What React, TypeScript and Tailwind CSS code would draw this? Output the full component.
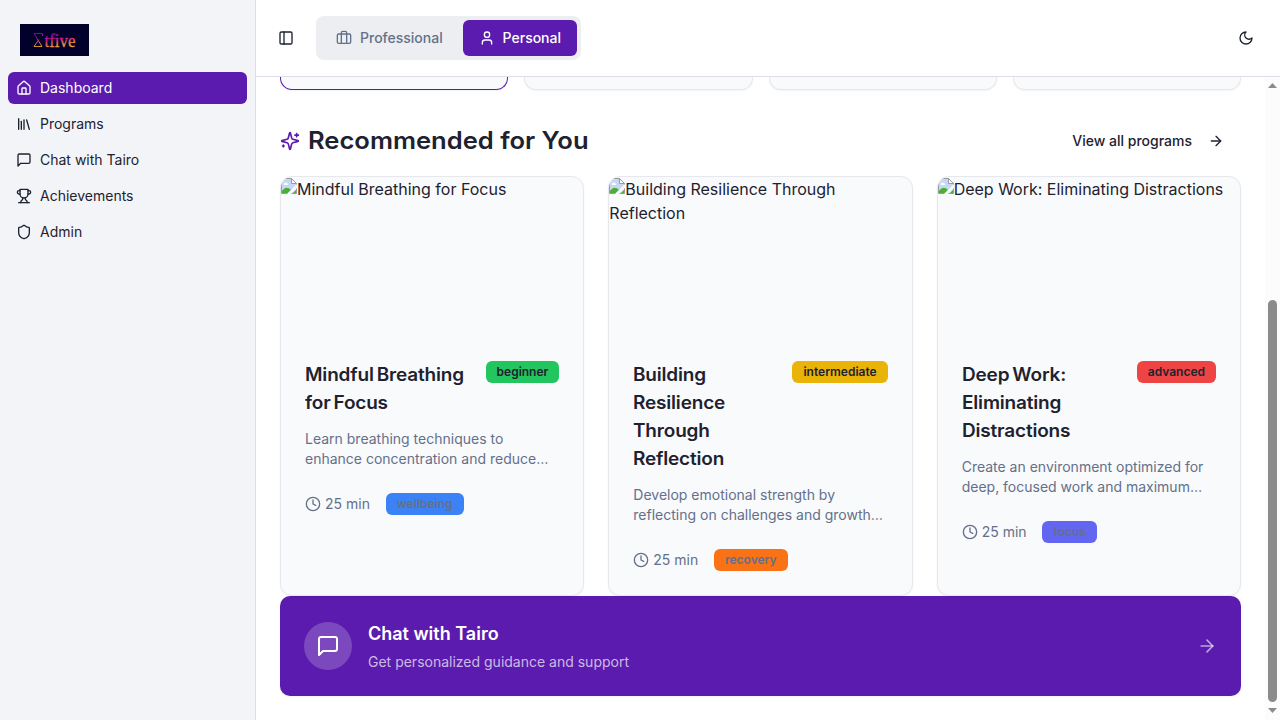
import type { ReactNode } from "react";
import { ArrowRight, Clock, House, Library, PanelLeft, Shield, User } from "lucide-react";

type IconProps = { size?: number; className?: string };

function Outline({ size = 16, className, children }: IconProps & { children: ReactNode }) {
  return (
    <svg
      width={size}
      height={size}
      viewBox="0 0 24 24"
      fill="none"
      stroke="currentColor"
      strokeWidth="2"
      strokeLinecap="round"
      strokeLinejoin="round"
      className={className}
    >
      {children}
    </svg>
  );
}

function ChatIcon(props: IconProps) {
  return (
    <Outline {...props}>
      <path d="M21 15a2 2 0 0 1-2 2H7l-4 4V5a2 2 0 0 1 2-2h14a2 2 0 0 1 2 2z" />
    </Outline>
  );
}

function TrophyIcon(props: IconProps) {
  return (
    <Outline {...props}>
      <path d="M6 9H4.5a2.5 2.5 0 0 1 0-5H6" />
      <path d="M18 9h1.5a2.5 2.5 0 0 0 0-5H18" />
      <path d="M4 22h16" />
      <path d="M10 14.66V17c0 .55-.47.98-.97 1.21C7.85 18.75 7 20.24 7 22" />
      <path d="M14 14.66V17c0 .55.47.98.97 1.21C16.15 18.75 17 20.24 17 22" />
      <path d="M18 2H6v7a6 6 0 0 0 12 0V2Z" />
    </Outline>
  );
}

function SparklesIcon(props: IconProps) {
  return (
    <Outline {...props}>
      <path d="M9.937 15.5A2 2 0 0 0 8.5 14.063l-6.135-1.582a.5.5 0 0 1 0-.962L8.5 9.936A2 2 0 0 0 9.937 8.5l1.582-6.135a.5.5 0 0 1 .963 0L14.063 8.5A2 2 0 0 0 15.5 9.937l6.135 1.581a.5.5 0 0 1 0 .964L15.5 14.063a2 2 0 0 0-1.437 1.437l-1.582 6.135a.5.5 0 0 1-.963 0z" />
      <path d="M20 3v4M22 5h-4M4 17v2M5 18H3" />
    </Outline>
  );
}

function MoonIcon(props: IconProps) {
  return (
    <Outline {...props}>
      <path d="M12 3a6 6 0 0 0 9 9 9 9 0 1 1-9-9Z" />
    </Outline>
  );
}

function BriefcaseIcon(props: IconProps) {
  return (
    <Outline {...props}>
      <path d="M16 20V4a2 2 0 0 0-2-2h-4a2 2 0 0 0-2 2v16" />
      <rect width="20" height="14" x="2" y="6" rx="2" />
    </Outline>
  );
}

const navItems = [
  { label: "Dashboard", icon: House, active: true },
  { label: "Programs", icon: Library },
  { label: "Chat with Tairo", icon: ChatIcon },
  { label: "Achievements", icon: TrophyIcon },
  { label: "Admin", icon: Shield },
];

const statBorders = ["border-[#5b1bae]", "border-[#e6e8ed]", "border-[#e6e8ed]", "border-[#e6e8ed]"];

const programs = [
  {
    title: "Mindful Breathing for Focus",
    lines: ["Mindful Breathing", "for Focus"],
    description: ["Learn breathing techniques to", "enhance concentration and reduce…"],
    level: "beginner",
    levelColor: "bg-[#22c55e]",
    tag: "wellbeing",
    tagColor: "bg-[#3b82f6]",
  },
  {
    title: "Building Resilience Through Reflection",
    lines: ["Building", "Resilience", "Through", "Reflection"],
    description: ["Develop emotional strength by", "reflecting on challenges and growth…"],
    level: "intermediate",
    levelColor: "bg-[#eab308]",
    tag: "recovery",
    tagColor: "bg-[#f97316]",
  },
  {
    title: "Deep Work: Eliminating Distractions",
    lines: ["Deep Work:", "Eliminating", "Distractions"],
    description: ["Create an environment optimized for", "deep, focused work and maximum…"],
    level: "advanced",
    levelColor: "bg-[#ef4444]",
    tag: "focus",
    tagColor: "bg-[#6366f1]",
  },
];

function Logo() {
  return (
    <svg width="69" height="32" viewBox="0 0 69 32" className="block">
      <defs>
        <linearGradient id="logo" x1="0" y1="0" x2="0.25" y2="1">
          <stop offset="0.2" stopColor="#8b0a9c" />
          <stop offset="0.5" stopColor="#c81888" />
          <stop offset="0.85" stopColor="#eea02c" />
        </linearGradient>
      </defs>
      <rect width="69" height="32" fill="#01012b" />
      <path d="M22.5 12V9.5H14l8 13h-8l5-7" fill="none" stroke="url(#logo)" strokeWidth="0.9" />
      <text x="24.5" y="22.5" fill="url(#logo)" stroke="url(#logo)" strokeWidth="0.3" fontFamily="Liberation Serif, serif" fontSize="18" textLength="31" lengthAdjust="spacingAndGlyphs">
        tfive
      </text>
    </svg>
  );
}

function BrokenImage() {
  return (
    <svg width="16" height="16" viewBox="0 0 16 16" className="relative -top-px inline-block align-baseline">
      <path d="M.5.5h10l5 5v10H.5z" fill="#c6d8f4" stroke="#9a9a9a" />
      <path d="M10.5.5v5h5z" fill="#fff" stroke="#9a9a9a" />
      <path d="M3 6.5c0-2 2-2.5 2.7-1.2C7 5 7.5 6 7 7H3z" fill="#fff" />
      <path d="M1 15v-2c3-4 6-4 9-1l-3 3z" fill="#4caf35" />
      <path d="M6 16 16 6v4l-6 6z" fill="#f8fafc" />
      <path d="M12 15h3v-3z" fill="#4caf35" />
    </svg>
  );
}

function ProgramCard({ program }: { program: (typeof programs)[number] }) {
  return (
    <article className="h-[420px] overflow-hidden rounded-xl border border-[#e6e8ed] bg-[#f9fafc] shadow-[0_1px_2px_0_rgb(0_0_0/0.05)]">
      <div className="h-40 text-base leading-6">
        <BrokenImage />
        {program.title}
      </div>
      <div className="p-6">
        <div className="flex items-start justify-between">
          <h3 className="origin-left scale-x-[1.055] text-lg leading-7 font-semibold tracking-[-0.17px] whitespace-nowrap [word-spacing:-1.5px]">
            {program.lines.map((line) => (
              <span key={line} className="block">{line}</span>
            ))}
          </h3>
          <span className={`flex h-[22px] shrink-0 items-center rounded-md px-[11px] text-xs font-semibold ${program.levelColor}`}>
            {program.level}
          </span>
        </div>
        <p className="mt-3 text-sm leading-5 whitespace-nowrap text-[#64708a]">
          {program.description.map((line) => (
            <span key={line} className="block">{line}</span>
          ))}
        </p>
        <div className="mt-6 flex h-[22px] items-center text-sm text-[#64708a]">
          <span className="flex w-[80.7px] items-center gap-1">
            <Clock size={16} />
            25 min
          </span>
          <span className={`flex h-[22px] items-center rounded-md px-[11px] text-xs font-semibold ${program.tagColor}`}>
            {program.tag}
          </span>
        </div>
      </div>
    </article>
  );
}

export default function App() {
  return (
    <div className="flex h-screen w-full overflow-hidden bg-white font-['Inter',sans-serif] text-[#1e222f]">
      <aside className="flex w-64 shrink-0 flex-col border-r border-[#dcdfe6] bg-[#f2f4f8]">
        <div className="px-5 pt-6 pb-4">
          <Logo />
        </div>
        <nav className="flex flex-col gap-1 px-2">
          {navItems.map(({ label, icon: Icon, active }) => (
            <a
              key={label}
              className={`flex h-8 items-center gap-2 rounded-md px-2 text-sm ${active ? "bg-[#5b1bae] text-white" : ""}`}
            >
              <Icon size={16} />
              {label}
            </a>
          ))}
        </nav>
      </aside>
      <div className="flex min-w-0 flex-1 flex-col">
        <header className="flex h-[77px] shrink-0 items-center border-b border-[#dcdfe6] pr-[26px] pl-[22px]">
          <PanelLeft size={16} />
          <div className="ml-[22px] flex h-11 items-center rounded-lg bg-[#eceef2] p-1 text-sm font-medium">
            <button className="flex h-9 w-[142.6px] items-center gap-2 pl-4 text-[#64708a]">
              <BriefcaseIcon />
              Professional
            </button>
            <button className="flex h-9 w-[114.2px] items-center gap-2 rounded-md bg-[#5b1bae] pl-4 text-white">
              <User size={16} />
              Personal
            </button>
          </div>
          <MoonIcon className="ml-auto" />
        </header>
        <div className="flex min-h-0 flex-1">
          <main className="min-w-0 flex-1 px-6">
            <div className="grid grid-cols-4 gap-4">
              {statBorders.map((border, index) => (
                <div
                  key={index}
                  className={`h-[13px] rounded-b-xl border border-t-0 bg-[#f9fafc] shadow-[0_1px_2px_0_rgb(0_0_0/0.05)] ${border}`}
                />
              ))}
            </div>
            <div className="mt-8 mb-4 flex h-[38px] items-center justify-between">
              <h2 className="flex items-center gap-2 text-2xl font-semibold">
                <SparklesIcon size={20} className="text-[#5b1bae]" />
                <span className="origin-left scale-x-[1.065]">Recommended for You</span>
              </h2>
              <button className="flex items-center gap-4 pr-[17px] text-sm font-medium">
                View all programs
                <ArrowRight size={16} />
              </button>
            </div>
            <div className="grid grid-cols-3 gap-6">
              {programs.map((program) => (
                <ProgramCard key={program.title} program={program} />
              ))}
            </div>
            <section className="flex h-[100px] items-center gap-4 rounded-[10px] bg-[#5b1bae] px-6 text-white shadow-[0_1px_2px_0_rgb(0_0_0/0.05)]">
              <div className="flex size-12 items-center justify-center rounded-full bg-white/20">
                <ChatIcon size={24} />
              </div>
              <div>
                <h3 className="text-lg leading-7 font-semibold">Chat with Tairo</h3>
                <p className="mt-1 text-sm leading-5 text-white/70">Get personalized guidance and support</p>
              </div>
              <ArrowRight size={20} className="ml-auto text-white/60" />
            </section>
          </main>
          <div className="flex w-[15px] shrink-0 flex-col items-center bg-[#fcfcfc]">
            <svg width="15" height="15" viewBox="0 0 15 15"><path d="M3 11 7.5 6 12 11z" fill="#8b8b8b" /></svg>
            <div className="mt-[208px] h-[402px] w-[9px] rounded-full bg-[#8b8b8b]" />
            <svg width="15" height="15" viewBox="0 0 15 15" className="mt-0.5"><path d="M3 4h9l-4.5 5z" fill="#8b8b8b" /></svg>
          </div>
        </div>
      </div>
    </div>
  );
}
